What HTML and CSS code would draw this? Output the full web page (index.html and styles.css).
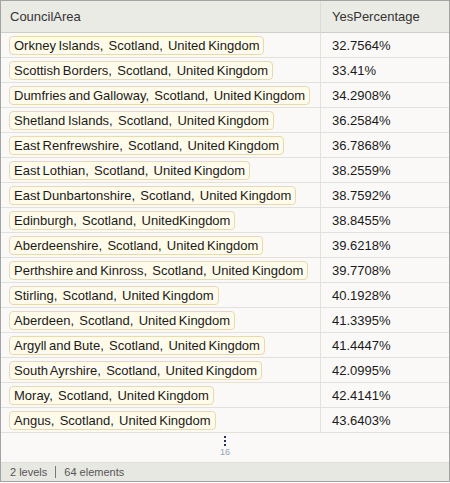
FILE: index.html
```html
<!DOCTYPE html>
<html>
<head>
<meta charset="utf-8">
<link rel="stylesheet" href="styles.css">
</head>
<body>
<div class="frame">
  <div class="grid">
    <div class="hcell c1">CouncilArea</div>
    <div class="hcell c2">YesPercentage</div>

    <div class="cell c1"><span class="chip">Orkney Islands,&nbsp; Scotland,&nbsp; United Kingdom</span></div><div class="cell c2">32.7564%</div>
    <div class="cell c1"><span class="chip">Scottish Borders,&nbsp; Scotland,&nbsp; United Kingdom</span></div><div class="cell c2">33.41%</div>
    <div class="cell c1"><span class="chip">Dumfries and Galloway,&nbsp; Scotland,&nbsp; United Kingdom</span></div><div class="cell c2">34.2908%</div>
    <div class="cell c1"><span class="chip">Shetland Islands,&nbsp; Scotland,&nbsp; United Kingdom</span></div><div class="cell c2">36.2584%</div>
    <div class="cell c1"><span class="chip">East Renfrewshire,&nbsp; Scotland,&nbsp; United Kingdom</span></div><div class="cell c2">36.7868%</div>
    <div class="cell c1"><span class="chip">East Lothian,&nbsp; Scotland,&nbsp; United Kingdom</span></div><div class="cell c2">38.2559%</div>
    <div class="cell c1"><span class="chip">East Dunbartonshire,&nbsp; Scotland,&nbsp; United Kingdom</span></div><div class="cell c2">38.7592%</div>
    <div class="cell c1"><span class="chip">Edinburgh,&nbsp; Scotland,&nbsp; UnitedKingdom</span></div><div class="cell c2">38.8455%</div>
    <div class="cell c1"><span class="chip">Aberdeenshire,&nbsp; Scotland,&nbsp; United Kingdom</span></div><div class="cell c2">39.6218%</div>
    <div class="cell c1"><span class="chip">Perthshire and Kinross,&nbsp; Scotland,&nbsp; United Kingdom</span></div><div class="cell c2">39.7708%</div>
    <div class="cell c1"><span class="chip">Stirling,&nbsp; Scotland,&nbsp; United Kingdom</span></div><div class="cell c2">40.1928%</div>
    <div class="cell c1"><span class="chip">Aberdeen,&nbsp; Scotland,&nbsp; United Kingdom</span></div><div class="cell c2">41.3395%</div>
    <div class="cell c1"><span class="chip">Argyll and Bute,&nbsp; Scotland,&nbsp; United Kingdom</span></div><div class="cell c2">41.4447%</div>
    <div class="cell c1"><span class="chip">South Ayrshire,&nbsp; Scotland,&nbsp; United Kingdom</span></div><div class="cell c2">42.0995%</div>
    <div class="cell c1"><span class="chip">Moray,&nbsp; Scotland,&nbsp; United Kingdom</span></div><div class="cell c2">42.4141%</div>
    <div class="cell c1"><span class="chip">Angus,&nbsp; Scotland,&nbsp; United Kingdom</span></div><div class="cell c2">43.6403%</div>
  </div>
  <div class="more">
    <div class="dots"><i></i><i></i><i></i></div>
    <div class="count">16</div>
  </div>
  <div class="footer"><span>2 levels</span><span class="sep"></span><span>64 elements</span></div>
</div>
</body>
</html>
```

FILE: styles.css
```css
html, body {
  margin: 0;
  padding: 0;
  background: #ffffff;
}
.frame {
  width: 448px;
  height: 480px;
  border: 1px solid #a3a3a3;
  background: #faf9f7;
  font-family: "Liberation Sans", Arial, sans-serif;
  font-size: 13px;
  color: #1a1a1a;
  display: flex;
  flex-direction: column;
}
.grid {
  display: grid;
  grid-template-columns: 320px 1fr;
  grid-auto-rows: 25px;
  grid-template-rows: 32px;
}
.hcell {
  background: #ebebe6;
  border-bottom: 1px solid #cfcfca;
  display: flex;
  align-items: center;
  color: #333333;
  padding-left: 9px;
}
.hcell.c1 { border-right: 1px solid #dcdcd6; }
.hcell.c2 { padding-left: 11px; }
.cell {
  border-bottom: 1px solid #e2e1dd;
  display: flex;
  align-items: center;
}
.cell.c1 {
  border-right: 1px solid #e2e1dd;
  padding-left: 8px;
}
.cell.c2 { padding-left: 11px; }
.chip {
  display: inline-block;
  height: 17px;
  line-height: 17px;
  padding: 0 4px;
  background: #fffbea;
  border: 1px solid #e6dab5;
  border-radius: 4px;
  white-space: nowrap;
  word-spacing: -1px;
}
.more {
  height: 29px;
  flex-shrink: 0;
  display: flex;
  flex-direction: column;
  align-items: center;
  padding-top: 3px;
  box-sizing: border-box;
}
.dots {
  display: flex;
  flex-direction: column;
  gap: 2px;
  align-items: center;
}
.dots i {
  display: block;
  width: 2px;
  height: 2px;
  background: #223355;
}
.count {
  font-size: 9px;
  color: #8fa3b8;
  line-height: 10px;
  margin-top: 1px;
}
.footer {
  flex: 1;
  background: #e8e8e3;
  border-top: 1px solid #e0e0db;
  display: flex;
  align-items: center;
  padding-left: 9px;
  font-size: 11px;
  color: #555555;
  gap: 8px;
}
.sep {
  width: 1px;
  height: 12px;
  background: #777777;
}
```
